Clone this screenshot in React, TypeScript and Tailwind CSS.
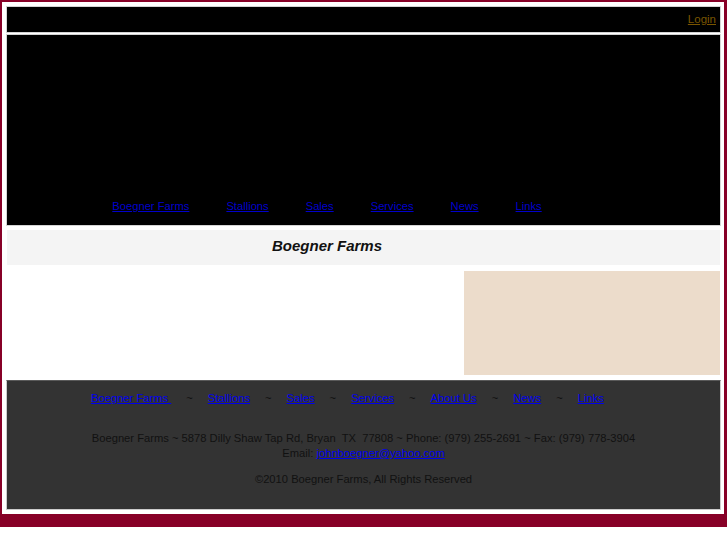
import React from "react";

export default function App() {
  const heroLinks = ["Boegner Farms", "Stallions", "Sales", "Services", "News", "Links"];
  const footLinks = ["Boegner Farms ", "Stallions", "Sales", "Services", "About Us", "News", "Links"];
  return (
    <div className="w-[727px] h-[545px] bg-white text-[11.2px] leading-[15px]" style={{ fontFamily: '"Liberation Sans", Arial, sans-serif' }}>
      <div className="border-t-2 border-l-2 border-r-[3px] border-b-[13px] border-[#870027] pt-1 pl-1 pr-[3px] pb-1 flex flex-col">
        <div className="h-[27px] border border-[#d4d4d4] bg-black flex items-center justify-end pr-[4px]">
          <a href="#" className="text-[#7a5500] underline text-[11.5px]">Login</a>
        </div>
        <div className="mt-px h-[192px] border border-[#d4d4d4] bg-black flex flex-col justify-end pb-[11px]">
          <div className="w-[640px] flex justify-center gap-[37px]">
            {heroLinks.map((l) => (
              <a key={l} href="#" className="text-[#0000cc] underline">{l}</a>
            ))}
          </div>
        </div>
        <div className="mt-[3px] h-[37px] border border-white bg-[#f4f4f4] flex items-center pb-[3px]">
          <div className="w-[640px] text-center text-[15px] leading-[18px] font-bold italic text-[#111]">Boegner Farms</div>
        </div>
        <div className="mt-[5px] h-[106px] flex">
          <div className="flex-1" />
          <div className="w-[256px] mr-px h-[104px] bg-[#ecdccb]" />
        </div>
        <div className="mt-[3px] h-[130px] border border-[#cccccc] border-t-[#5a5a5a] bg-[#333333] text-[#111] pt-[10px]">
          <div className="flex items-center pl-[84px] gap-[15px]">
            {footLinks.map((l, i) => (
              <React.Fragment key={l}>
                {i > 0 && <span>~</span>}
                <a href="#" className="text-[#0000ee] underline whitespace-pre">{l}</a>
              </React.Fragment>
            ))}
          </div>
          <div className="mt-[25px] text-center whitespace-pre">
            {"Boegner Farms ~ 5878 Dilly Shaw Tap Rd, Bryan  TX  77808 ~ Phone: (979) 255-2691 ~ Fax: (979) 778-3904"}
          </div>
          <div className="text-center">
            Email: <a href="#" className="text-[#0000ee] underline">johnboegner@yahoo.com</a>
          </div>
          <div className="mt-[11px] text-center">©2010 Boegner Farms, All Rights Reserved</div>
        </div>
      </div>
    </div>
  );
}
